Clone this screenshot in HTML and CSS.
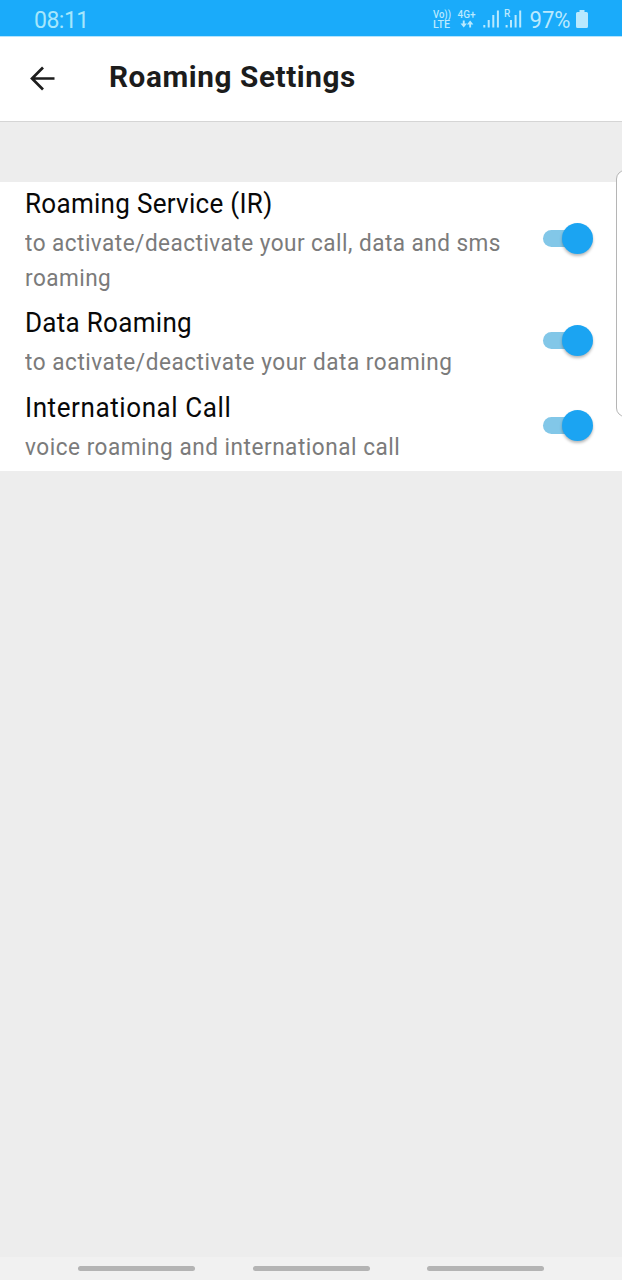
FILE: index.html
```html
<!DOCTYPE html>
<html lang="en">
<head>
<meta charset="utf-8">
<title>Roaming Settings</title>
<link rel="stylesheet" href="styles.css">
</head>
<body>
<div class="status">
  <span class="clock">08:11</span>
  <svg class="indicators" width="162" height="36" viewBox="428 0 162 36">
    <g fill="#b9e9fe">
      <text class="tiny" x="433" y="17.5" textLength="18" lengthAdjust="spacingAndGlyphs">Vo))</text>
      <text class="tiny" x="433" y="27.5" textLength="17" lengthAdjust="spacingAndGlyphs">LTE</text>
      <text class="tiny" x="457.500" y="17.500" textLength="18" lengthAdjust="spacingAndGlyphs">4G+</text>
      <path d="M462.800 20.500h1.900v3h2.300l-3.250 4-3.250-4h2.300zM469.200 27.500h1.900v-3h2.300l-3.250-4-3.250 4h2.300z"/>
      <path d="M483.300 25h2v2.500h-2zM487.700 20h2v7.500h-2zM492.300 15h2v12.500h-2zM496.900 10.500h2v17h-2z"/>
      <path d="M505.600 25h2v2.500h-2zM510 20h2v7.500h-2zM514.600 15h2v12.500h-2zM519.200 10.500h2v17h-2z"/>
      <text class="tiny" x="504" y="17">R</text>
      <text class="percent" x="529.500" y="27.500" textLength="41" lengthAdjust="spacingAndGlyphs">97%</text>
      <path d="M579.500 10h5v2h2a1.500 1.500 0 0 1 1.500 1.500v13a1.500 1.500 0 0 1-1.500 1.500h-9a1.500 1.500 0 0 1-1.500-1.500v-13a1.500 1.500 0 0 1 1.500-1.500h2z"/>
    </g>
  </svg>
</div>
<header class="appbar">
  <svg class="back" width="26" height="26" viewBox="0 0 26 26"><path d="M24.500 12.500H2.500M13 1.500L2 12.500L13 23.500"/></svg>
  <h1>Roaming Settings</h1>
</header>
<main>
  <section class="list">
    <div class="row">
      <div class="copy">
        <h2 class="t1">Roaming Service (IR)</h2>
        <p><span class="s1">to activate/deactivate your call, data and sms</span><br><span class="s1">roaming</span></p>
      </div>
      <div class="switch"></div>
    </div>
    <div class="row">
      <div class="copy">
        <h2 class="t2">Data Roaming</h2>
        <p><span class="s2">to activate/deactivate your data roaming</span></p>
      </div>
      <div class="switch"></div>
    </div>
    <div class="row">
      <div class="copy">
        <h2 class="t3">International Call</h2>
        <p><span class="s3">voice roaming and international call</span></p>
      </div>
      <div class="switch"></div>
    </div>
  </section>
</main>
<nav class="navbar"><i></i><i></i><i></i></nav>
<div class="edge"></div>
</body>
</html>
```
FILE: styles.css
```css
* { box-sizing: border-box; }
body {
  margin: 0;
  height: 1280px;
  display: flex;
  flex-direction: column;
  position: relative;
  overflow: hidden;
  background: #ededed;
  font-family: Roboto, "Liberation Sans", sans-serif;
}
.status {
  height: 37px;
  display: flex;
  justify-content: space-between;
  padding: 0 32px 0 34px;
  background: #1aabfa;
  border-bottom: 1px solid #b4e4fd;
}
.clock { font-size: 23px; line-height: 41px; color: #a5e6fc; letter-spacing: -0.5px; }
.tiny { font-size: 10px; font-weight: 500; }
.percent { font-size: 23px; }
.appbar {
  height: 85px;
  display: flex;
  align-items: center;
  padding: 0 30px 1px;
  background: #fff;
  border-bottom: 1px solid #d5d5d5;
}
.back { fill: none; stroke: #1d1d1d; stroke-width: 2.7; }
h1 {
  margin: 0 0 5px 53px;
  font-size: 30px;
  font-weight: 700;
  color: #1c1c1c;
  white-space: nowrap;
  letter-spacing: .6px;
  transform: scaleX(.99);
}
main { flex: 1; padding-top: 60px; }
.list { background: #fff; padding: 0 29.5px 0 24.5px; }
.row { display: flex; justify-content: space-between; align-items: center; height: 85px; }
.row:first-child { height: 119px; }
.copy { align-self: flex-start; white-space: nowrap; width: 490px; }
h2 {
  margin: 0;
  height: 44px;
  font-size: 28px;
  font-weight: 400;
  line-height: 43px;
  color: #080808;
  transform: scaleX(.93);
}
.t1 { letter-spacing: .3px; }
.t2 { letter-spacing: .3px; }
.t3 { letter-spacing: .62px; }
p { margin: 0; font-size: 24px; line-height: 35px; color: #7b7b7b; }
h1, h2, p span { transform-origin: 0 50%; }
p span { display: inline-block; transform: scaleX(.94); }
.s1 { letter-spacing: .5px; }
.s2 { letter-spacing: .57px; }
.s3 { letter-spacing: .56px; }
.switch {
  width: 50px;
  height: 31px;
  margin-bottom: 6px;
  display: flex;
  justify-content: flex-end;
  align-items: center;
}
.switch::before {
  content: "";
  width: 38px;
  height: 17px;
  margin-right: -18px;
  border-radius: 9px;
  background: #82c7e8;
}
.switch::after {
  content: "";
  width: 31px;
  height: 31px;
  flex: none;
  border-radius: 50%;
  background: #1ba4f2;
  box-shadow: 0 2px 3px rgba(0, 0, 0, .28);
}
.navbar {
  height: 23px;
  display: flex;
  justify-content: center;
  gap: 57.5px;
  padding-top: 9px;
  background: #f1f1f1;
}
.navbar i { width: 117px; height: 5px; border-radius: 3px; background: #b4b4b4; }
.edge {
  position: absolute;
  top: 170px;
  right: -12px;
  width: 18px;
  height: 247px;
  border: 1px solid #b5b5b5;
  border-radius: 9px;
  background: #fff;
}
```
